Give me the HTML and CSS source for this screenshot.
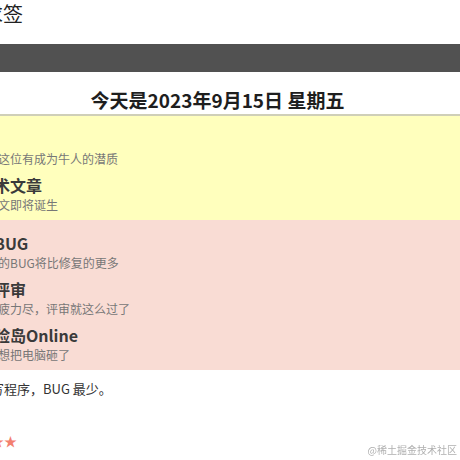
FILE: index.html
```html
<!DOCTYPE html>
<html lang="zh-CN">
<head>
<meta charset="utf-8">
<title>程序员求签</title>
<link rel="stylesheet" href="styles.css">
</head>
<body>
<div class="page">
  <h1 class="app-title">程序员求签</h1>
  <div class="title-bar"></div>
  <div class="date">今天是2023年9月15日 星期五</div>

  <section class="band good">
    <div class="band-label">宜</div>
    <ul class="events">
      <li><div class="name">招人</div><div class="desc">你面前这位有成为牛人的潜质</div></li>
      <li><div class="name">写技术文章</div><div class="desc">一篇好文即将诞生</div></li>
    </ul>
  </section>

  <section class="band bad">
    <div class="band-label">忌</div>
    <ul class="events">
      <li><div class="name">修复BUG</div><div class="desc">新产生的BUG将比修复的更多</div></li>
      <li><div class="name">设计评审</div><div class="desc">人人筋疲力尽，评审就这么过了</div></li>
      <li><div class="name">玩冒险岛Online</div><div class="desc">除非你想把电脑砸了</div></li>
    </ul>
  </section>

  <p class="tip">座位朝向：面向<span class="direction">西北方</span>写程序，BUG 最少。</p>
  <p class="tip">今日宜饮：水</p>
  <p class="tip">女神亲近指数：<span class="stars">★★★★★</span></p>
</div>
<div class="watermark">@稀土掘金技术社区</div>
</body>
</html>
```

FILE: styles.css
```css
html, body {
  margin: 0;
  padding: 0;
}

body {
  background: #fff;
  overflow: hidden;
  font-family: "Noto Sans CJK SC", "Liberation Sans", sans-serif;
  color: #333;
}

.page {
  width: 741px;
  margin-left: -153px;
}

.app-title {
  margin: 0;
  padding-left: 76px;
  font-size: 20px;
  font-weight: 400;
  line-height: 28px;
  color: #222;
}

.title-bar {
  margin-top: 16px;
  height: 28px;
  background: #515151;
}

.date {
  padding-top: 14px;
  height: 28px;
  line-height: 28px;
  font-size: 19px;
  font-weight: 700;
  text-align: center;
  color: #1e1e1e;
}

.band {
  display: grid;
  grid-template-columns: 100px 1fr;
  column-gap: 15px;
}

.good {
  background: #ffffbd;
  border-top: 2px solid #cfcfb8;
}

.bad {
  background: #f9dcd4;
}

.band-label {
  display: flex;
  align-items: center;
  justify-content: center;
  font-size: 30px;
  font-weight: 700;
}

.good .band-label {
  background: #ffee44;
}

.bad .band-label {
  background: #ff4444;
  color: #fff;
}

.events {
  list-style: none;
  margin: 0;
  padding: 12px 10px 0 0;
}

.name {
  font-size: 16px;
  font-weight: 700;
  line-height: 23px;
  color: #3a3a3a;
}

.desc {
  font-size: 12px;
  line-height: 15px;
  color: #777;
  margin-bottom: 8px;
}

.tip {
  margin: 10px 0 0 14px;
  font-size: 13px;
  line-height: 18px;
  color: #333;
}

.tip + .tip {
  margin-top: 8px;
}

.direction {
  color: #44aa44;
  font-weight: 700;
}

.stars {
  color: #f3806f;
}

.watermark {
  position: fixed;
  right: 3px;
  bottom: 3px;
  font-size: 10px;
  line-height: 14px;
  color: #b0b0b0;
}
```
